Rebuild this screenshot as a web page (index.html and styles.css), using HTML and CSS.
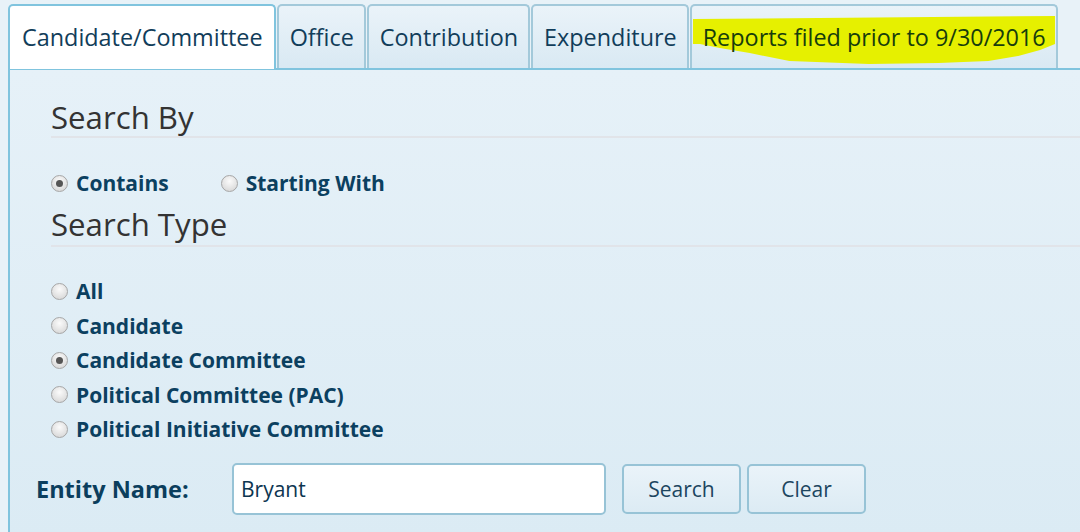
FILE: index.html
```html
<!DOCTYPE html>
<html>
<head>
<meta charset="utf-8">
<link rel="stylesheet" href="styles.css">
</head>
<body>
<div class="wrap">
  <ul class="tabs">
    <li class="tab active"><span class="tab-label">Candidate/Committee</span></li>
    <li class="tab"><span class="tab-label">Office</span></li>
    <li class="tab"><span class="tab-label">Contribution</span></li>
    <li class="tab"><span class="tab-label">Expenditure</span></li>
    <li class="tab">
      <svg class="highlight" viewBox="0 0 370 64" preserveAspectRatio="none" aria-hidden="true">
        <polygon points="3,15 367,12 367,40 352,46 330,52 300,57 250,59 180,60 100,57 60,49 30,44 10,40 3,40" fill="#e6f000"/>
      </svg>
      <span class="tab-label tab-label-hl">Reports filed prior to 9/30/2016</span>
    </li>
  </ul>
  <div class="panel">
    <div class="section">
      <h2 class="heading">Search By</h2>
      <div class="radio-inline">
        <label class="radio"><span class="dot checked"></span>Contains</label>
        <label class="radio"><span class="dot"></span>Starting With</label>
      </div>
      <h2 class="heading heading-second">Search Type</h2>
      <div class="radio-list">
        <label class="radio"><span class="dot"></span>All</label>
        <label class="radio"><span class="dot"></span>Candidate</label>
        <label class="radio"><span class="dot checked"></span>Candidate Committee</label>
        <label class="radio"><span class="dot"></span>Political Committee (PAC)</label>
        <label class="radio"><span class="dot"></span>Political Initiative Committee</label>
      </div>
    </div>
    <div class="entity-row">
      <span class="entity-label">Entity Name:</span>
      <div class="text-input">Bryant</div>
      <button class="btn btn-first">Search</button>
      <button class="btn">Clear</button>
    </div>
  </div>
</div>
</body>
</html>
```

FILE: styles.css
```css
html, body {
  margin: 0;
  padding: 0;
}
body {
  background: #e8f2f8;
  font-family: "Open Sans", "Noto Sans", sans-serif;
  overflow: hidden;
  height: 532px;
}
.wrap {
  width: 1120px;
  padding: 4px 0 0 8px;
}
.tabs {
  list-style: none;
  margin: 0;
  padding: 0;
  display: flex;
  gap: 1px;
  height: 64px;
}
.tab {
  position: relative;
  display: flex;
  align-items: center;
  padding: 0 10px 0 11px;
  height: 64px;
  box-sizing: border-box;
  border: 2px solid #a3c9da;
  border-bottom: none;
  border-radius: 5px 5px 0 0;
  background: linear-gradient(#eaf3f9, #d9e9f3);
  color: #113d5a;
  font-size: 23.4px;
}
.tab.active {
  background: #ffffff;
  border-color: #80c4de;
  height: 65px;
  margin-bottom: -1px;
  padding: 0 11px 0 12px;
  z-index: 2;
}
.tab-label {
  position: relative;
  z-index: 1;
  padding-bottom: 1px;
}
.tab-label-hl {
  color: #173d0c;
}
.highlight {
  position: absolute;
  left: -2px;
  top: -2px;
  width: calc(100% + 4px);
  height: 64px;
}
.panel {
  border-top: 2px solid #80c4de;
  border-left: 2px solid #80c4de;
  background: linear-gradient(#e6f1f8, #dbebf4);
  padding: 0 0 40px 26px;
  height: 470px;
  box-sizing: border-box;
}
.section {
  padding-left: 15px;
}
.heading {
  margin: 29px 0 0 0;
  font-size: 31.2px;
  font-weight: 400;
  line-height: 36px;
  color: #333333;
  padding-bottom: 1px;
  border-bottom: 2px solid #e1e4e9;
}
.heading-second {
  margin-top: 6px;
  padding-bottom: 3px;
}
.radio-inline {
  display: flex;
  gap: 52px;
  margin-top: 28px;
}
.radio-list {
  margin-top: 27px;
  display: flex;
  flex-direction: column;
}
.radio {
  display: flex;
  align-items: center;
  font-size: 21px;
  font-weight: 700;
  color: #0b4060;
  line-height: 34.5px;
  height: 34.5px;
}
.radio-inline .radio {
  height: 34px;
  line-height: 34px;
}
.dot {
  width: 15px;
  height: 15px;
  border-radius: 50%;
  border: 1px solid #a6a6a6;
  background: radial-gradient(circle at 50% 35%, #fbfbfb, #dcdcdc 75%);
  margin-right: 8px;
  display: flex;
  align-items: center;
  justify-content: center;
  flex-shrink: 0;
}
.dot.checked::after {
  content: "";
  width: 7px;
  height: 7px;
  border-radius: 50%;
  background: #555555;
}
.entity-row {
  display: flex;
  align-items: center;
  margin-top: 16px;
}
.entity-label {
  font-size: 23.5px;
  font-weight: 700;
  color: #0b3e5d;
  width: 196px;
}
.text-input {
  width: 374px;
  height: 52px;
  box-sizing: border-box;
  border: 2px solid #97c3d6;
  border-radius: 5px;
  background: #ffffff;
  padding: 0 7px;
  font-size: 21px;
  color: #0d3550;
  display: flex;
  align-items: center;
}
.btn {
  width: 119px;
  height: 50px;
  box-sizing: border-box;
  border: 2px solid #97c3d6;
  border-radius: 5px;
  background: linear-gradient(#eaf3f9, #dcebf4);
  font-family: "Open Sans", "Noto Sans", sans-serif;
  font-size: 21px;
  color: #1c4560;
  margin-left: 6px;
  padding: 0;
}
.btn-first {
  margin-left: 16px;
}
```
